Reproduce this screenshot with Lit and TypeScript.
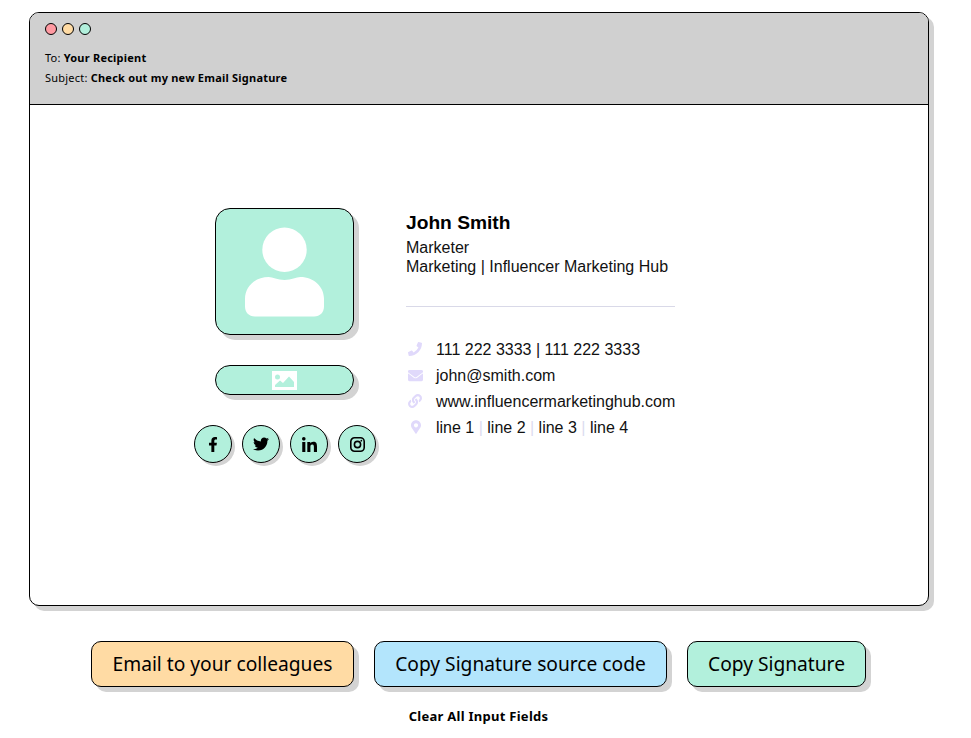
import { LitElement, html, css } from "lit";
import { customElement } from "lit/decorators.js";

const PHONE = "M497.39 361.8l-112-48a24 24 0 0 0-28 6.9l-49.6 60.6A370.66 370.66 0 0 1 130.6 204.11l60.6-49.6a23.94 23.94 0 0 0 6.9-28l-48-112A24.16 24.16 0 0 0 122.6.61l-104 24A24 24 0 0 0 0 48c0 256.5 207.9 464 464 464a24 24 0 0 0 23.4-18.6l24-104a24.29 24.29 0 0 0-14.01-27.6z";
const FB = "M279.14 288l14.22-92.66h-88.91v-60.13c0-25.35 12.42-50.06 52.24-50.06h40.42V6.26S260.43 0 225.36 0c-73.22 0-121.08 44.38-121.08 124.72v70.62H22.89V288h81.39v224h100.17V288z";
const TW = "M459.37 151.716c.325 4.548.325 9.097.325 13.645 0 138.72-105.583 298.558-298.558 298.558-59.452 0-114.68-17.219-161.137-47.106 8.447.974 16.568 1.299 25.34 1.299 49.055 0 94.213-16.568 130.274-44.832-46.132-.975-84.792-31.188-98.112-72.772 6.498.974 12.995 1.624 19.818 1.624 9.421 0 18.843-1.3 27.614-3.573-48.081-9.747-84.143-51.98-84.143-102.985v-1.299c13.969 7.797 30.214 12.67 47.431 13.319-28.264-18.843-46.781-51.005-46.781-87.391 0-19.492 5.197-37.36 14.294-52.954 51.655 63.675 129.3 105.258 216.365 109.807-1.624-7.797-2.599-15.918-2.599-24.04 0-57.828 46.782-104.934 104.934-104.934 30.213 0 57.502 12.67 76.67 33.137 23.715-4.548 46.456-13.32 66.599-25.34-7.798 24.366-24.366 44.833-46.132 57.827 21.117-2.273 41.584-8.122 60.426-16.243-14.292 20.791-32.161 39.308-52.628 54.253z";
const LI = "M100.28 448H7.4V148.9h92.88zM53.79 108.1C24.09 108.1 0 83.5 0 53.8a53.79 53.79 0 0 1 107.58 0c0 29.7-24.1 54.3-53.79 54.3zM447.9 448h-92.68V302.4c0-34.7-.7-79.2-48.29-79.2-48.29 0-55.69 37.7-55.69 76.7V448h-92.78V148.9h89.08v40.8h1.3c12.4-23.5 42.69-48.3 87.88-48.3 94 0 111.28 61.9 111.28 142.3V448z";
const ENV = "M502.3 190.8c3.9-3.1 9.7-.2 9.7 4.7V400c0 26.5-21.5 48-48 48H48c-26.5 0-48-21.5-48-48V195.6c0-5 5.7-7.8 9.7-4.7 22.4 17.4 52.1 39.5 154.1 113.6 21.1 15.4 56.7 47.8 92.2 47.6 35.7.3 72-32.8 92.3-47.6 102-74.1 131.6-96.3 154-113.7zM256 320c23.2.4 56.6-29.2 73.4-41.4 132.7-96.3 142.8-104.7 173.4-128.7 5.8-4.5 9.2-11.5 9.2-18.9v-19c0-26.5-21.5-48-48-48H48C21.5 64 0 85.5 0 112v19c0 7.4 3.4 14.3 9.2 18.9 30.6 23.9 40.7 32.4 173.4 128.7 16.8 12.2 50.2 41.8 73.4 41.4z";
const LINK = "M326.612 185.391c59.747 59.809 58.927 155.698.36 214.59-.11.12-.24.25-.36.37l-67.2 67.2c-59.27 59.27-155.699 59.262-214.96 0-59.27-59.26-59.27-155.7 0-214.96l37.106-37.106c9.84-9.84 26.786-3.3 27.294 10.606.648 17.722 3.826 35.527 9.69 52.721 1.986 5.822.567 12.262-3.783 16.612l-13.087 13.087c-28.026 28.026-28.905 73.66-1.155 101.96 28.024 28.579 74.086 28.749 102.325.51l67.2-67.19c28.191-28.191 28.073-73.757 0-101.83-3.701-3.694-7.429-6.564-10.341-8.569a16.037 16.037 0 0 1-6.947-12.606c-.396-10.567 3.348-21.456 11.698-29.806l21.054-21.055c5.521-5.521 14.182-6.199 20.584-1.731a152.482 152.482 0 0 1 20.522 17.197zM467.547 44.449c-59.261-59.262-155.69-59.27-214.96 0l-67.2 67.2c-.12.12-.25.25-.36.37-58.566 58.892-59.387 154.781.36 214.59a152.454 152.454 0 0 0 20.521 17.196c6.402 4.468 15.064 3.789 20.584-1.731l21.054-21.055c8.35-8.35 12.094-19.239 11.698-29.806a16.037 16.037 0 0 0-6.947-12.606c-2.912-2.005-6.64-4.875-10.341-8.569-28.073-28.073-28.191-73.639 0-101.83l67.2-67.19c28.239-28.239 74.3-28.069 102.325.51 27.75 28.3 26.872 73.934-1.155 101.96l-13.087 13.087c-4.35 4.35-5.769 10.79-3.783 16.612 5.864 17.194 9.042 34.999 9.69 52.721.509 13.906 17.454 20.446 27.294 10.606l37.106-37.106c59.271-59.259 59.271-155.699.001-214.959z";
const PIN = "M172.268 501.67C26.97 291.031 0 260.999 0 192 0 85.961 85.961 0 192 0s192 85.961 192 192c0 69.031-26.97 99.031-172.268 309.67-9.535 13.774-29.93 13.773-39.464 0zM192 272c44.183 0 80-35.817 80-80s-35.817-80-80-80-80 35.817-80 80 35.817 80 80 80z";

@customElement("app-root")
export class AppRoot extends LitElement {
  static styles = css`
    :host { display: block; font-family: "Noto Sans", sans-serif; color: #000; }
    .page { padding: 12px 0 0 29px; width: 900px; }
    .window { box-sizing: border-box; width: 900px; height: 594px; border: 1px solid #000; border-radius: 10px; box-shadow: 5px 5px 0 #d3d3d3; display: flex; flex-direction: column; background: #fff; }
    .head { box-sizing: border-box; height: 92px; background: #d0d0d0; border-bottom: 1px solid #000; border-radius: 9px 9px 0 0; padding: 10px 15px; font-size: 11px; letter-spacing: .22px; }
    .dots { display: flex; gap: 5px; margin-bottom: 13px; }
    .dot { box-sizing: border-box; width: 12px; height: 12px; border-radius: 50%; border: 1px solid #000; }
    .red { background: #ff9aa2; } .amber { background: #ffdba4; } .mint { background: #b2f0dc; }
    .meta { height: 20px; line-height: 20px; }
    .meta b { font-weight: 700; }
    .body { flex: 1; padding: 103px 0 0 164px; display: flex; gap: 30px; align-items: flex-start; }
    .left { width: 182px; display: flex; flex-direction: column; align-items: flex-start; }
    .photo { box-sizing: border-box; width: 139px; height: 127px; margin-left: 21px; background: #b2f0dc; border: 1px solid #000; border-radius: 15px; box-shadow: 5px 5px 0 #d3d3d3; display: flex; align-items: center; justify-content: center; }
    .imgbtn { box-sizing: border-box; width: 139px; height: 30px; margin: 30px 0 0 21px; background: #b2f0dc; border: 1px solid #000; border-radius: 15px; box-shadow: 5px 5px 0 #d3d3d3; display: flex; align-items: center; justify-content: center; }
    .socials { display: flex; gap: 10px; margin-top: 30px; }
    .soc { box-sizing: border-box; width: 38px; height: 38px; border-radius: 50%; background: #b2f0dc; border: 1px solid #000; box-shadow: 3px 3px 0 #d3d3d3; display: flex; align-items: center; justify-content: center; }
    .right { width: 269px; font-family: "Liberation Sans", Arial, sans-serif; font-size: 16px; line-height: 19px; color: #111; }
    .name { font-size: 19.2px; font-weight: 700; line-height: 24px; margin-top: 3px; color: #000; }
    .role { margin-top: 3px; }
    hr { border: 0; border-top: 1px solid #d9d9e8; margin: 30px 0 29px; }
    .row { display: flex; align-items: center; height: 26px; white-space: nowrap; }
    .ico { width: 30px; flex: none; display: flex; padding-left: 2px; box-sizing: border-box; }
    .ico svg { fill: #e0d9fb; display: block; }
    .pin { margin-left: 3px; }
    .sep { color: #dcdcf0; }
    .actions { display: flex; gap: 20px; margin-top: 35px; padding-left: 62px; }
    .btn { box-sizing: border-box; height: 46px; padding-bottom: 2px; border: 1px solid #000; border-radius: 10px; box-shadow: 5px 5px 0 #d3d3d3; font-size: 19.2px; display: flex; align-items: center; justify-content: center; color: #000; }
    .b1 { width: 263px; background: #ffdba4; } .b2 { width: 293px; background: #b3e5fc; } .b3 { width: 179px; background: #b2f0dc; }
    .clear { text-align: center; font-size: 13px; font-weight: 700; letter-spacing: .27px; margin-top: 20px; margin-left: -1px; }
  `;

  render() {
    return html`<div class="page">
      <div class="window">
        <div class="head">
          <div class="dots"><span class="dot red"></span><span class="dot amber"></span><span class="dot mint"></span></div>
          <div class="meta">To: <b>Your Recipient</b></div>
          <div class="meta">Subject: <b>Check out my new Email Signature</b></div>
        </div>
        <div class="body">
          <div class="left">
            <div class="photo">
              <svg width="79" height="90" viewBox="0 0 80 90" fill="#fff"><circle cx="40" cy="22.500" r="22.500"/><path d="M0 80V72C0 60 10 50 24 50C28 50 33 53 40 53C47 53 52 50 56 50C70 50 80 60 80 72V80C80 86 76 90 70 90H10C4 90 0 86 0 80Z"/></svg>
            </div>
            <div class="imgbtn">
              <svg width="25" height="19" viewBox="0 0 25 19"><path fill="#fff" fill-rule="evenodd" d="M0 0H25V19H0ZM5.500 3.500A2.500 2.500 0 1 0 5.500 8.500A2.500 2.500 0 1 0 5.500 3.500ZM3 16H22V11L17 5.500L11 12L8 9.500L3 14Z"/></svg>
            </div>
            <div class="socials">
              <div class="soc"><svg width="10" height="15" viewBox="0 0 320 512"><path d=${FB}/></svg></div>
              <div class="soc"><svg width="16" height="16" viewBox="0 0 512 512"><path d=${TW}/></svg></div>
              <div class="soc"><svg width="15" height="15" viewBox="0 0 448 448"><path d=${LI}/></svg></div>
              <div class="soc"><svg width="15" height="15" viewBox="0 0 16 16" fill="none" stroke="#000" stroke-width="1.700"><rect x=".85" y=".85" width="14.300" height="14.300" rx="4"/><circle cx="8" cy="8" r="3.300"/><circle cx="12.100" cy="3.900" r=".9" fill="#000" stroke="none"/></svg></div>
            </div>
          </div>
          <div class="right">
            <div class="name">John Smith</div>
            <div class="role">Marketer<br>Marketing | Influencer Marketing Hub</div>
            <hr>
            <div class="row"><span class="ico"><svg width="14" height="14" viewBox="0 0 512 512"><path transform="matrix(-1 0 0 1 512 0)" d=${PHONE}/></svg></span>111 222 3333 | 111 222 3333</div>
            <div class="row"><span class="ico"><svg width="15" height="15" viewBox="0 0 512 512"><path d=${ENV}/></svg></span>john@smith.com</div>
            <div class="row"><span class="ico"><svg width="14" height="14" viewBox="0 0 512 512"><path d=${LINK}/></svg></span>www.influencermarketinghub.com</div>
            <div class="row"><span class="ico"><svg class="pin" width="10" height="14" viewBox="0 0 384 512"><path d=${PIN}/></svg></span>line 1 <span class="sep">&nbsp;|&nbsp;</span> line 2 <span class="sep">&nbsp;|&nbsp;</span> line 3 <span class="sep">&nbsp;|&nbsp;</span> line 4</div>
          </div>
        </div>
      </div>
      <div class="actions">
        <div class="btn b1">Email to your colleagues</div>
        <div class="btn b2">Copy Signature source code</div>
        <div class="btn b3">Copy Signature</div>
      </div>
      <div class="clear">Clear All Input Fields</div>
    </div>`;
  }
}
